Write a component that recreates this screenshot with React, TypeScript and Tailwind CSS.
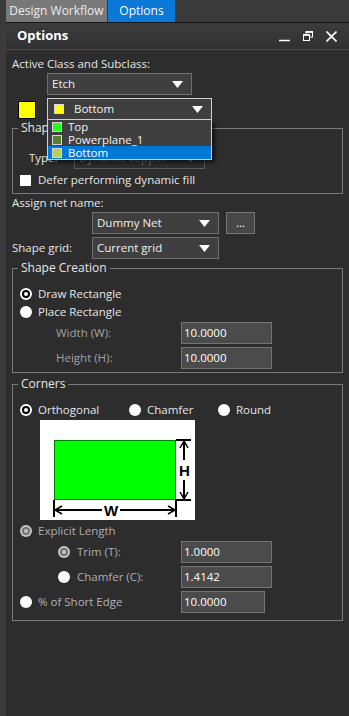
import React from 'react'

const font = "[font-family:'Open_Sans',sans-serif]"

function Arrow({ dim }: { dim?: boolean }) {
  return (
    <svg width="11" height="7" viewBox="0 0 11 7" className="shrink-0">
      <polygon points="0,0 11,0 5.5,7" fill={dim ? '#8a8a8a' : '#ffffff'} />
    </svg>
  )
}

function Select({ text, className, dim }: { text: string; className: string; dim?: boolean }) {
  return (
    <div
      className={`h-[22px] flex items-center justify-between pl-[4px] pr-[8px] border ${
        dim ? 'border-[#5a5a5a] bg-[#2d2d2d] text-[#7c7c7c]' : 'border-[#6e6e6e] bg-[#3f3f3f] text-[#f0f0f0]'
      } ${className}`}
    >
      <span>{text}</span>
      <Arrow dim={dim} />
    </div>
  )
}

function Radio({ on, dim }: { on?: boolean; dim?: boolean }) {
  return (
    <div
      className={`w-[12px] h-[12px] rounded-full flex items-center justify-center shrink-0 ${
        dim ? 'bg-[#c4c4c4]' : 'bg-white'
      }`}
    >
      {on && (
        <div className={`w-[8px] h-[8px] rounded-full border-2 ${dim ? 'border-[#707070]' : 'border-black'}`} />
      )}
    </div>
  )
}

function Field({ value, className }: { value: string; className: string }) {
  return (
    <div className={`h-[22px] flex items-center pl-[2px] border border-[#747474] bg-[#4b4b4b] text-white ${className}`}>
      {value}
    </div>
  )
}

function Group({ title, className, children }: { title: string; className: string; children: React.ReactNode }) {
  return (
    <div className={`relative border border-[#7a7a7a] ${className}`}>
      <span className="absolute -top-[9px] left-[5px] px-[3px] leading-[16px] text-[12px] bg-[#2d2d2d] text-[#e6e6e6]">
        {title}
      </span>
      {children}
    </div>
  )
}

function Swatch({ color }: { color: string }) {
  return <div className="w-[10px] h-[10px] border border-[#d8d8d8] shrink-0" style={{ backgroundColor: color }} />
}

function Diagram() {
  return (
    <svg width="155" height="100" viewBox="0 0 155 100" className="block">
      <rect x="0" y="0" width="155" height="100" fill="#ffffff" />
      <rect x="14.5" y="20.5" width="121" height="59" fill="#00ff00" stroke="#008000" />
      {/* H dimension */}
      <line x1="136" y1="20" x2="151" y2="20" stroke="#000" strokeWidth="2" />
      <line x1="136" y1="80" x2="151" y2="80" stroke="#000" strokeWidth="2" />
      <line x1="144" y1="21" x2="144" y2="40" stroke="#000" strokeWidth="2" />
      <line x1="144" y1="60" x2="144" y2="79" stroke="#000" strokeWidth="2" />
      <polyline points="140,28 144,21 148,28" fill="none" stroke="#000" strokeWidth="1.5" />
      <polyline points="140,72 144,79 148,72" fill="none" stroke="#000" strokeWidth="1.5" />
      <text x="144.5" y="56" textAnchor="middle" fontFamily="Liberation Sans, Arial, sans-serif" fontWeight="700" fontSize="15">H</text>
      {/* W dimension */}
      <line x1="14" y1="80" x2="14" y2="97" stroke="#000" strokeWidth="2" />
      <line x1="136" y1="80" x2="136" y2="97" stroke="#000" strokeWidth="2" />
      <line x1="15" y1="90" x2="62" y2="90" stroke="#000" strokeWidth="2" />
      <line x1="80" y1="90" x2="135" y2="90" stroke="#000" strokeWidth="2" />
      <polyline points="22,86 15,90 22,94" fill="none" stroke="#000" strokeWidth="1.5" />
      <polyline points="128,86 135,90 128,94" fill="none" stroke="#000" strokeWidth="1.5" />
      <text x="71" y="96" textAnchor="middle" fontFamily="Liberation Sans, Arial, sans-serif" fontWeight="700" fontSize="15">W</text>
    </svg>
  )
}

export default function App() {
  return (
    <div className={`w-[349px] h-[716px] flex bg-[#2d2d2d] text-[11.5px] text-[#e6e6e6] overflow-hidden ${font}`}>
      {/* left strip */}
      <div className="w-[6px] bg-[#3b3b3b] shrink-0" />

      <div className="flex-1 flex flex-col">
        {/* tab bar */}
        <div className="h-[23px] flex items-stretch bg-[#3b3b3b] border-b border-[#161616] text-[12px]">
          <div className="w-[101px] flex items-center justify-center bg-[#787878] text-[#ececec]">Design Workflow</div>
          <div className="w-[67px] ml-[1px] flex items-center justify-center bg-[#0a78d7] text-white">Options</div>
        </div>

        {/* header */}
        <div className="h-[27px] flex items-center justify-between pl-[11px] pr-[12px] bg-gradient-to-b from-[#3c3c3c] to-[#313131] border-b border-[#4a4a4a]">
          <span className="text-[13px] font-bold text-white">Options</span>
          <div className="flex items-center gap-[13px]">
            <svg width="11" height="11" viewBox="0 0 11 11">
              <line x1="0" y1="9.5" x2="11" y2="9.5" stroke="#fff" strokeWidth="1.5" />
            </svg>
            <svg width="10" height="10" viewBox="0 0 10 10">
              <rect x="3" y="0.5" width="6.5" height="5.5" fill="none" stroke="#fff" strokeWidth="1" />
              <rect x="0.5" y="3.5" width="6" height="6" fill="#333" stroke="#fff" strokeWidth="1" />
              <line x1="3" y1="1.2" x2="9.5" y2="1.2" stroke="#fff" strokeWidth="1.4" />
              <line x1="0.5" y1="4.2" x2="6.5" y2="4.2" stroke="#fff" strokeWidth="1.4" />
            </svg>
            <svg width="11" height="11" viewBox="0 0 11 11">
              <line x1="0.5" y1="0.5" x2="10.5" y2="10.5" stroke="#fff" strokeWidth="1.6" />
              <line x1="10.5" y1="0.5" x2="0.5" y2="10.5" stroke="#fff" strokeWidth="1.6" />
            </svg>
          </div>
        </div>

        {/* content */}
        <div className="flex flex-col px-[6px]">
          <div className="mt-[6px] h-[16px] leading-[16px]">Active Class and Subclass:</div>
          <Select text="Etch" className="mt-[1px] ml-[35px] w-[145px]" />

          <div className="mt-[3px] h-[22px] flex">
            <div className="mt-[3px] ml-[6px] w-[18px] h-[18px] bg-[#ffff00] border border-black" />
            <div className="relative ml-[11px] w-[165px] z-10">
              <div className="h-[22px] flex items-center justify-between pl-[6px] pr-[8px] border border-[#cfcfcf] bg-[#3f3f3f] text-[#f0f0f0]">
                <div className="flex items-center">
                  <Swatch color="#ffff00" />
                  <span className="ml-[10px]">Bottom</span>
                </div>
                <Arrow />
              </div>
              <div className="absolute top-[22px] left-0 w-[165px] border border-t-0 border-[#cfcfcf] bg-[#3f3f3f] shadow-[3px_3px_3px_rgba(0,0,0,0.55)] text-[#f0f0f0]">
                <div className="h-[13px] flex items-center pl-[4px]">
                  <Swatch color="#22ff22" />
                  <span className="ml-[6px] leading-[13px]">Top</span>
                </div>
                <div className="h-[13px] flex items-center pl-[4px]">
                  <Swatch color="#5e7f32" />
                  <span className="ml-[6px] leading-[13px]">Powerplane_1</span>
                </div>
                <div className="h-[13px] flex items-center pl-[4px] bg-[#0078d7] text-white">
                  <Swatch color="#b3d157" />
                  <span className="ml-[6px] leading-[13px]">Bottom</span>
                </div>
              </div>
            </div>
          </div>

          <Group title="Shape Fill" className="mt-[8px] h-[66px]">
            <div className="pt-[18px] flex items-center">
              <span className="ml-[16px] w-[45px] text-[#e6e6e6]">Type:</span>
              <Select text="Dynamic copper" dim className="w-[131px]" />
            </div>
            <div className="mt-[3px] h-[16px] flex items-center">
              <div className="ml-[7px] w-[11px] h-[11px] bg-white" />
              <span className="ml-[7px]">Defer performing dynamic fill</span>
            </div>
          </Group>

          <div className="mt-[1px] h-[16px] leading-[16px]">Assign net name:</div>
          <div className="mt-[1px] h-[22px] flex">
            <Select text="Dummy Net" className="ml-[80px] w-[127px]" />
            <div className="ml-[7px] w-[29px] h-[22px] flex items-center justify-center border border-[#777777] bg-[#474747] text-white">
              ...
            </div>
          </div>
          <div className="mt-[3px] h-[22px] flex items-center">
            <span className="w-[80px]">Shape grid:</span>
            <Select text="Current grid" className="w-[127px]" />
          </div>

          <Group title="Shape Creation" className="mt-[9px] h-[105px]">
            <div className="pt-[16px]">
              <div className="h-[18px] flex items-center pl-[7px]">
                <Radio on />
                <span className="ml-[6px]">Draw Rectangle</span>
              </div>
              <div className="h-[18px] flex items-center pl-[7px]">
                <Radio />
                <span className="ml-[6px]">Place Rectangle</span>
              </div>
              <div className="mt-[1px] flex items-center">
                <span className="ml-[43px] w-[125px] text-[#a4a4a4]">Width (W):</span>
                <Field value="10.0000" className="w-[91px]" />
              </div>
              <div className="mt-[3px] flex items-center">
                <span className="ml-[43px] w-[125px] text-[#a4a4a4]">Height (H):</span>
                <Field value="10.0000" className="w-[91px]" />
              </div>
            </div>
          </Group>

          <Group title="Corners" className="mt-[11px] h-[237px]">
            <div className="pt-[16px]">
              <div className="h-[18px] flex items-center pl-[7px]">
                <div className="w-[109px] flex items-center">
                  <Radio on />
                  <span className="ml-[6px]">Orthogonal</span>
                </div>
                <div className="w-[89px] flex items-center">
                  <Radio />
                  <span className="ml-[6px]">Chamfer</span>
                </div>
                <div className="flex items-center">
                  <Radio />
                  <span className="ml-[6px]">Round</span>
                </div>
              </div>
              <div className="mt-[1px] ml-[27px]">
                <Diagram />
              </div>
              <div className="mt-[2px] h-[18px] flex items-center pl-[7px]">
                <Radio on dim />
                <span className="ml-[6px] text-[#aeaeae]">Explicit Length</span>
              </div>
              <div className="mt-[1px] flex items-center">
                <div className="ml-[45px] w-[123px] flex items-center">
                  <Radio on dim />
                  <span className="ml-[7px] text-[#aeaeae]">Trim (T):</span>
                </div>
                <Field value="1.0000" className="w-[91px]" />
              </div>
              <div className="mt-[3px] flex items-center">
                <div className="ml-[45px] w-[123px] flex items-center">
                  <Radio />
                  <span className="ml-[7px] text-[#aeaeae]">Chamfer (C):</span>
                </div>
                <Field value="1.4142" className="w-[91px]" />
              </div>
              <div className="mt-[3px] flex items-center">
                <div className="ml-[7px] w-[161px] flex items-center">
                  <Radio />
                  <span className="ml-[6px] text-[#b4b4b4]">% of Short Edge</span>
                </div>
                <Field value="10.0000" className="w-[84px]" />
              </div>
            </div>
          </Group>
        </div>
      </div>
    </div>
  )
}
